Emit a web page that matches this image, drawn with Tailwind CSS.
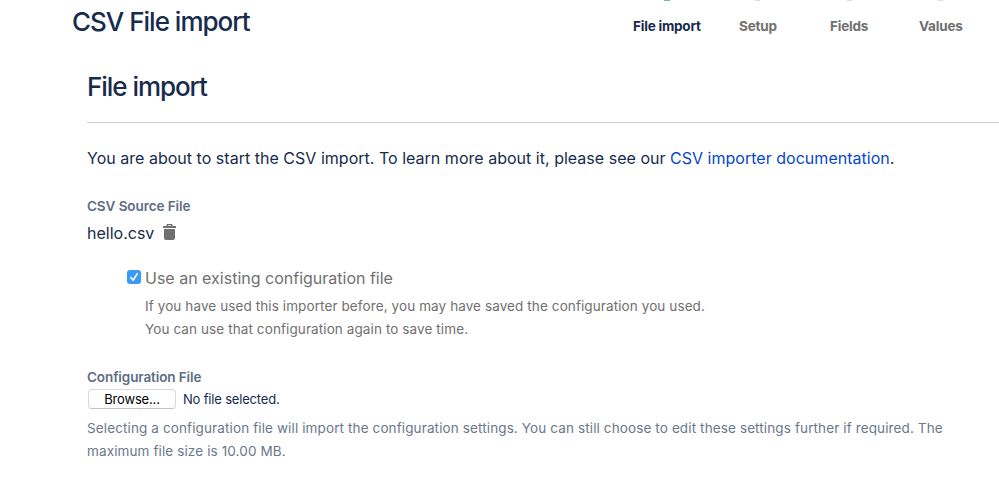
<!DOCTYPE html>
<html lang="en">
<head>
    <meta charset="UTF-8">
    <meta name="viewport" content="width=device-width, initial-scale=1.0">
    <script src="https://cdn.jsdelivr.net/npm/@tailwindcss/browser@4"></script>
    <title>CSV File import</title>
</head>
<body class="h-[495px] overflow-hidden bg-white font-['Inter','Liberation_Sans',sans-serif] text-[#172b4d] whitespace-nowrap">
<header class="flex h-[62px] pl-[72px]">
    <h1 class="w-[561px] pt-[6px] text-[26px] leading-8 font-medium tracking-[-1px]">CSV File import</h1>
    <!-- progress steps, scrolled so only the bottom of each dot shows -->
    <ol class="flex text-[13.5px] leading-5 font-bold tracking-[-0.2px] text-[#707070]">
        <li class="w-[106px] text-[#172b4d]"><div class="ml-[31px] mb-[15px] h-px w-[6px] bg-[#7fa9dc]"></div>File import</li>
        <li class="w-[91px]"><div class="ml-[16px] mb-[15px] h-px w-[5px] bg-[#ddd]"></div>Setup</li>
        <li class="w-[89px]"><div class="ml-[17px] mb-[15px] h-px w-[5px] bg-[#ddd]"></div>Fields</li>
        <li><div class="ml-[19px] mb-[15px] h-px w-[5px] bg-[#ddd]"></div>Values</li>
    </ol>
</header>
<main class="pl-[87px]">
    <h2 class="h-[61px] border-b border-[#ccc] pt-[9px] text-[26px] leading-8 font-medium tracking-[-1.05px]">File import</h2>
    <p class="mt-[23px] text-[16px] leading-6 tracking-[0.02px]">You are about to start the CSV import. To learn more about it, please see our <a href="#" class="text-[#0747c9]">CSV importer documentation</a>.</p>

    <div class="mt-[26px] text-[13.5px] leading-5 font-semibold tracking-[-0.08px] text-[#5e6c84]">CSV Source File</div>
    <div class="mt-[5px] flex items-center text-[16px] leading-6">
        <span class="w-[76px]">hello.csv</span>
        <svg class="-mt-[3px] h-4 w-[13px]" viewBox="0 0 13 16" fill="#707070">
            <path d="M0 2h3.5V.8q0-.8.8-.8h4.4q.8 0 .8.8V2H13v2H0zM5 1.2V2h3v-.8z" fill-rule="evenodd"/>
            <path d="M1 5h11v9q0 2-2 2H3q-2 0-2-2z"/>
        </svg>
    </div>

    <div class="mt-[21px] pl-[40px] text-[#707070]">
        <label class="flex items-center text-[16px] leading-6">
            <span class="-mt-[2px] mr-1 flex h-[14px] w-[14px] items-center justify-center rounded-[3px] bg-[#3b99fc]">
                <svg class="h-[14px] w-[14px]" viewBox="0 0 14 14" fill="none" stroke="#fff" stroke-width="1.6" stroke-linecap="round" stroke-linejoin="round"><path d="M3.8 7.4l2.3 2.8 4.2-6.6"/></svg>
            </span>
            <span>Use an existing configuration file</span>
        </label>
        <p class="mt-[5px] pl-[18px] text-[13.5px] leading-[23px] tracking-[0.1px]">If you have used this importer before, you may have saved the configuration you used.<br>You can use that configuration again to save time.</p>
    </div>

    <div class="mt-[26px] text-[13.5px] leading-5 font-semibold tracking-[-0.1px] text-[#5e6c84]">Configuration File</div>
    <div class="mt-[1px] flex h-[22px] items-center pl-[1px] text-[13px] tracking-[-0.18px]">
        <button class="mr-[7px] h-5 w-[88px] rounded-[4px] border border-[#d9d9d9] border-b-[#c4c4c4] bg-white leading-[18px] text-black">Browse...</button>
        <span class="pt-[2px]">No file selected.</span>
    </div>
    <p class="mt-[7px] text-[13.5px] leading-[23px] tracking-[0.12px] text-[#6b778c]">Selecting a configuration file will import the configuration settings. You can still choose to edit these settings further if required. The<br>maximum file size is 10.00 MB.</p>
</main>
</body>
</html>
